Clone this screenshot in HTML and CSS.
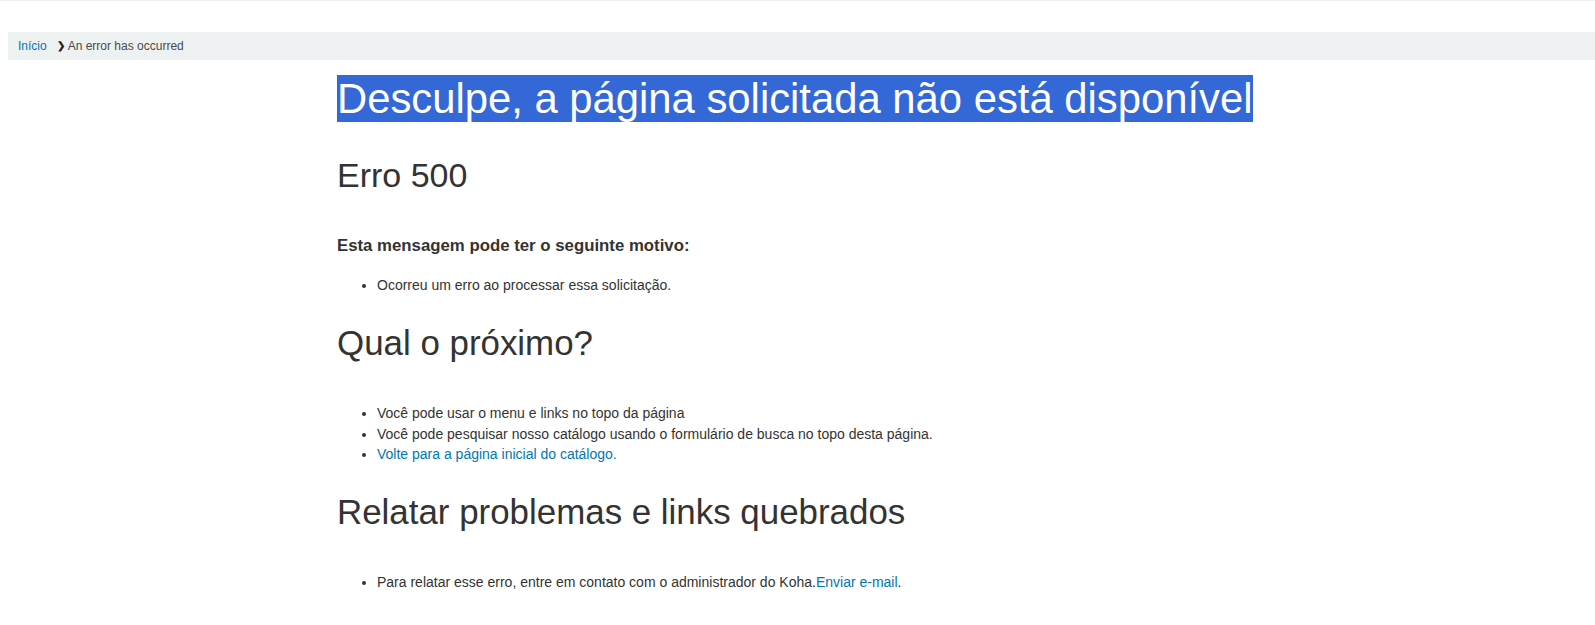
FILE: index.html
```html
<!DOCTYPE html>
<html lang="pt-BR">
<head>
<meta charset="utf-8">
<title>Erro 500</title>
<link rel="stylesheet" href="styles.css">
</head>
<body>
<div class="topline"></div>
<nav class="crumbs">
  <a href="#" class="crumb-link">Início</a>
  <span class="crumb-sep">&#10095;</span>
  <span class="crumb-current">An error has occurred</span>
</nav>
<main class="main">
  <h1 class="title"><span class="sel">Desculpe, a página solicitada não está disponível</span></h1>
  <h2 class="sub code">Erro 500</h2>
  <h3 class="reason">Esta mensagem pode ter o seguinte motivo:</h3>
  <ul class="list">
    <li>Ocorreu um erro ao processar essa solicitação.</li>
  </ul>
  <h2 class="sub">Qual o próximo?</h2>
  <ul class="list">
    <li>Você pode usar o menu e links no topo da página</li>
    <li>Você pode pesquisar nosso catálogo usando o formulário de busca no topo desta página.</li>
    <li><a href="#">Volte para a página inicial do catálogo.</a></li>
  </ul>
  <h2 class="sub">Relatar problemas e links quebrados</h2>
  <ul class="list">
    <li>Para relatar esse erro, entre em contato com o administrador do Koha.<a href="#">Enviar e-mail</a>.</li>
  </ul>
</main>
</body>
</html>
```
FILE: styles.css
```css
html, body {
  margin: 0;
  padding: 0;
  background: #fff;
}
body {
  font-family: "Liberation Sans", Arial, sans-serif;
  color: #333;
  font-size: 14px;
  line-height: 20.3px;
}
a {
  color: #0076b2;
  text-decoration: none;
}
.topline {
  height: 1px;
  background: #eef1f2;
}
.crumbs {
  margin: 31px 0 0 8px;
  height: 27.5px;
  background: #eef1f2;
  display: flex;
  align-items: center;
  padding-left: 10px;
  font-size: 12px;
  line-height: 14px;
  color: #4a4a4a;
}
.crumb-sep {
  font-size: 9.5px;
  font-weight: bold;
  color: #222;
  margin: 0 3px 0 10px;
}
.main {
  padding-left: 337px;
  padding-top: 15px;
}
.title {
  margin: 0 0 32px;
  font-size: 41.8px;
  font-weight: normal;
  line-height: 48px;
}
.sel {
  background: #3468d6;
  color: #fff;
}
.sub {
  font-size: 34.9px;
  font-weight: normal;
  line-height: 42px;
  margin: 0 0 39.5px;
}
.code {
  font-size: 34px;
  line-height: 40.8px;
  margin-bottom: 40.5px;
}
.reason {
  font-size: 16.8px;
  font-weight: bold;
  line-height: 20.2px;
  margin: 0 0 19px;
}
.list {
  margin: 0 0 26.5px;
  padding-left: 40px;
}
```
